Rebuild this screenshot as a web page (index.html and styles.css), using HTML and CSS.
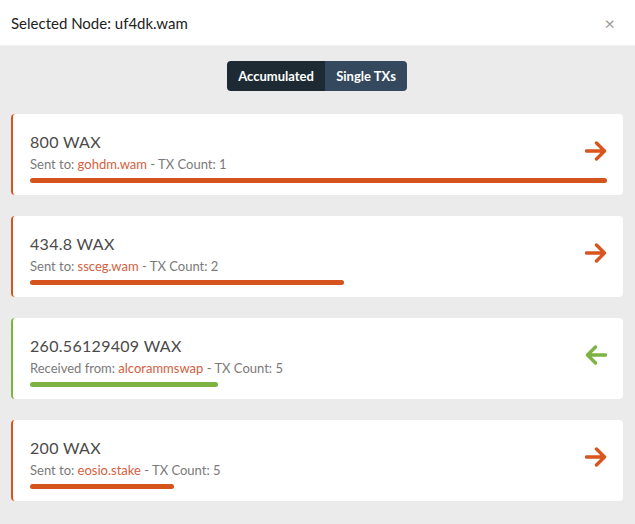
FILE: index.html
```html
<!DOCTYPE html>
<html>
<head>
<meta charset="utf-8">
<link rel="stylesheet" href="styles.css">
</head>
<body>
<div class="header">
  <div class="title">Selected Node: uf4dk.wam</div>
  <div class="close">×</div>
</div>
<div class="content">
  <div class="toggle">
    <div class="seg active">Accumulated</div>
    <div class="seg">Single TXs</div>
  </div>
  <div class="list">
    <div class="card sent">
      <div class="info">
        <div class="amount">800 WAX</div>
        <div class="sub">Sent to: <span class="acct">gohdm.wam</span> - TX Count: 1</div>
        <div class="bar" style="width:100%"></div>
      </div>
      <svg class="arrow" viewBox="0 0 22 20" width="22" height="20"><path d="M1.5 10H19.5M11.5 2L19.5 10L11.5 18"/></svg>
    </div>
    <div class="card sent">
      <div class="info">
        <div class="amount">434.8 WAX</div>
        <div class="sub">Sent to: <span class="acct">ssceg.wam</span> - TX Count: 2</div>
        <div class="bar" style="width:54.35%"></div>
      </div>
      <svg class="arrow" viewBox="0 0 22 20" width="22" height="20"><path d="M1.5 10H19.5M11.5 2L19.5 10L11.5 18"/></svg>
    </div>
    <div class="card recv">
      <div class="info">
        <div class="amount">260.56129409 WAX</div>
        <div class="sub">Received from: <span class="acct">alcorammswap</span> - TX Count: 5</div>
        <div class="bar" style="width:32.57%"></div>
      </div>
      <svg class="arrow" viewBox="0 0 22 20" width="22" height="20"><path d="M20.5 10H2.5M10.5 2L2.5 10L10.5 18"/></svg>
    </div>
    <div class="card sent">
      <div class="info">
        <div class="amount">200 WAX</div>
        <div class="sub">Sent to: <span class="acct">eosio.stake</span> - TX Count: 5</div>
        <div class="bar" style="width:25%"></div>
      </div>
      <svg class="arrow" viewBox="0 0 22 20" width="22" height="20"><path d="M1.5 10H19.5M11.5 2L19.5 10L11.5 18"/></svg>
    </div>
  </div>
</div>
</body>
</html>
```
FILE: styles.css
```css
html, body {
  margin: 0;
  padding: 0;
}
body {
  background: #ebebeb;
  font-family: Lato, "Noto Sans", sans-serif;
  width: 635px;
  height: 524px;
  overflow: hidden;
}
.header {
  height: 46px;
  background: #fff;
  display: flex;
  align-items: center;
  justify-content: space-between;
  padding: 0 20px 0 11px;
  border-bottom: 1px solid #f1f1f1;
  box-sizing: border-box;
}
.title {
  font-size: 15px;
  color: #222;
}
.close {
  font-size: 18px;
  color: #9a9a9a;
  line-height: 1;
}
.content {
  padding: 15px 12px 0 11px;
}
.toggle {
  display: flex;
  width: 180px;
  height: 30px;
  border-radius: 4px;
  overflow: hidden;
  margin-left: 216px;
}
.seg {
  display: flex;
  align-items: center;
  justify-content: center;
  color: #fff;
  font-weight: 700;
  font-size: 13px;
  background: #34495e;
  width: 82px;
}
.seg.active {
  background: #1d2a33;
  width: 98px;
}
.list {
  margin-top: 23px;
  display: flex;
  flex-direction: column;
  gap: 21px;
}
.card {
  height: 81px;
  box-sizing: border-box;
  background: #fff;
  border-radius: 4px;
  border-left: 2px solid #d5531d;
  padding: 18px 16px 0 17px;
  display: flex;
  align-items: flex-start;
  position: relative;
}
.card.recv {
  border-left-color: #7cb342;
}
.info {
  flex: 1;
}
.amount {
  font-size: 16px;
  line-height: 20px;
  color: #4a4a4a;
  letter-spacing: 0.3px;
}
.sub {
  margin-top: 3px;
  font-size: 13px;
  line-height: 18px;
  color: #7a7a7a;
}
.acct {
  color: #d4603e;
}
.bar {
  margin-top: 5px;
  height: 5px;
  border-radius: 3px;
  background: #d5531d;
}
.recv .bar {
  background: #7cb342;
}
.arrow {
  position: absolute;
  right: 16px;
  top: 27px;
  fill: none;
  stroke: #d9541e;
  stroke-width: 3.4;
  stroke-linecap: round;
  stroke-linejoin: round;
}
.recv .arrow {
  stroke: #7cb342;
}
```
